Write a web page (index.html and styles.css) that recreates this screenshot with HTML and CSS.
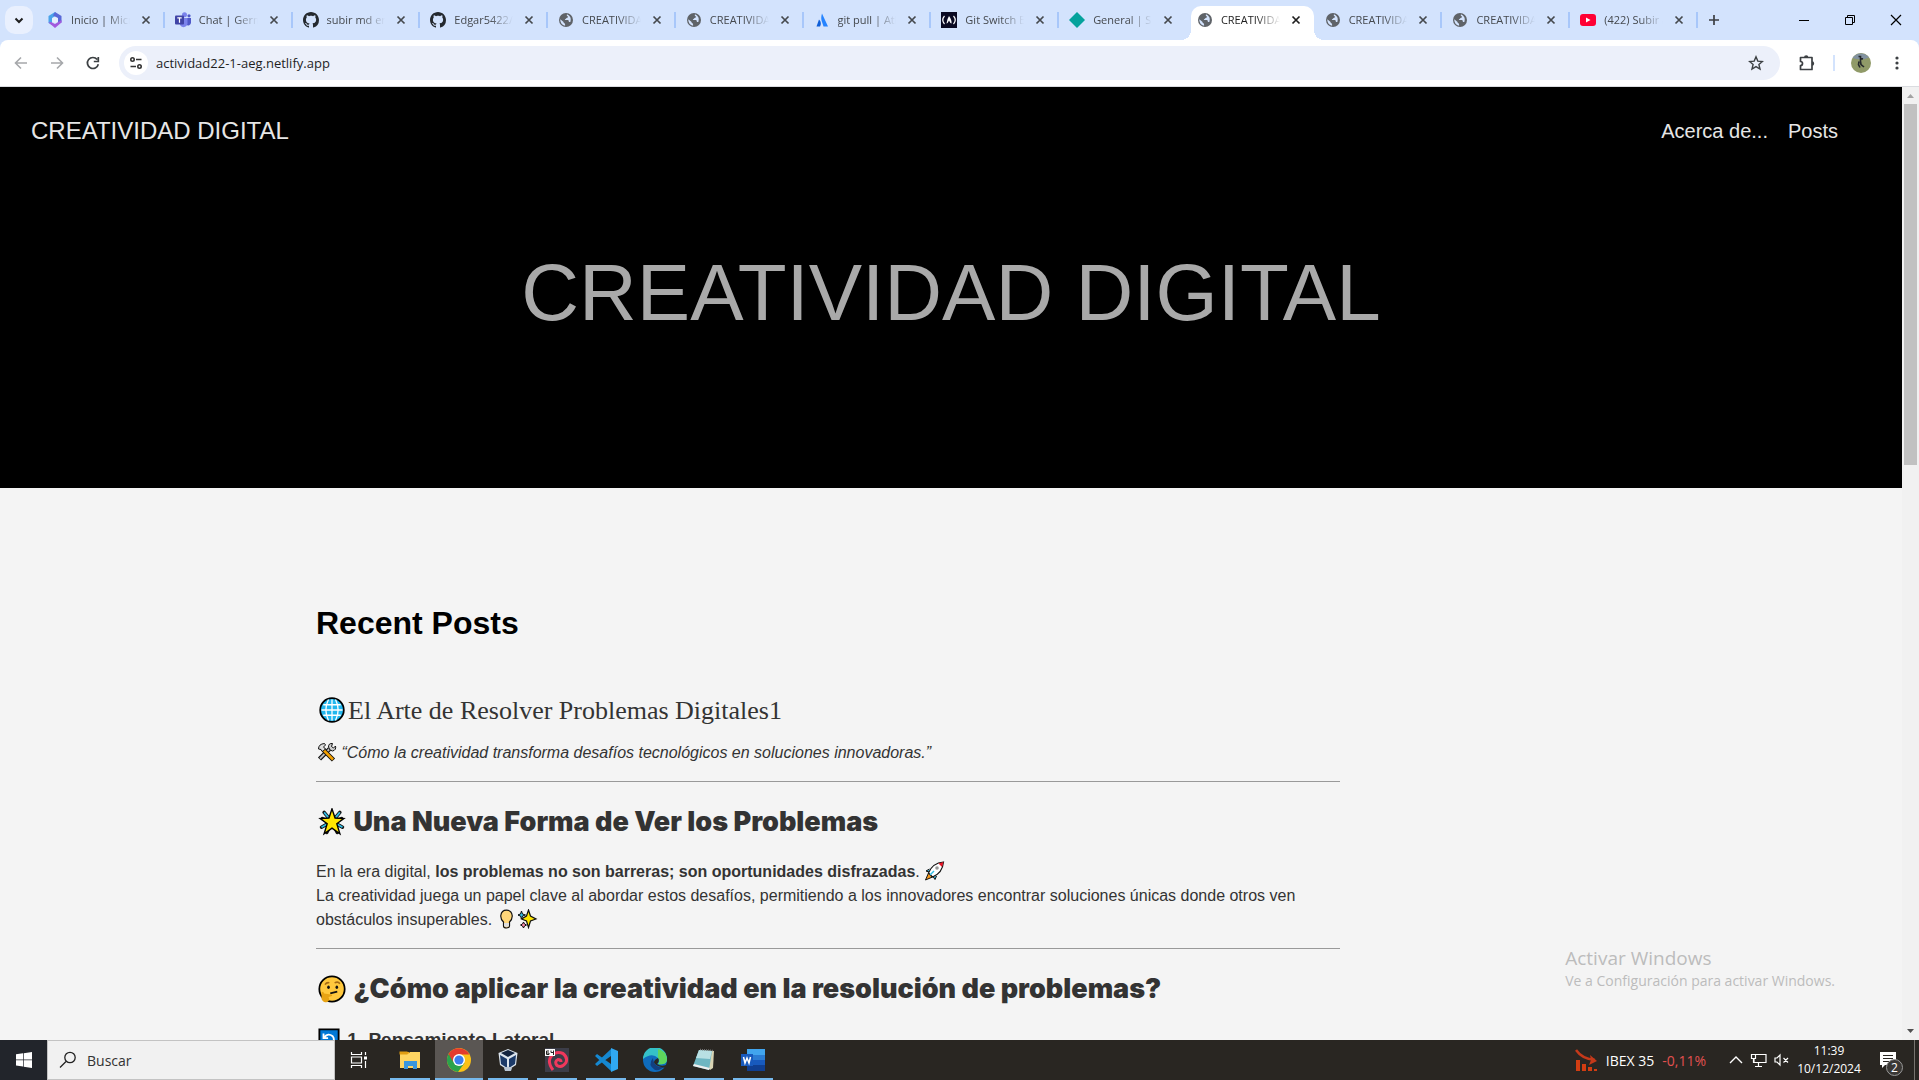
FILE: index.html
```html
<!DOCTYPE html>
<html lang="es">
<head>
<meta charset="utf-8">
<meta name="viewport" content="width=device-width, initial-scale=1">
<title>CREATIVIDAD DIGITAL</title>
<link rel="stylesheet" href="styles.css">
</head>
<body>
<svg class="sprite" aria-hidden="true">
  <symbol id="i-globe" viewBox="0 0 16 16"><circle cx="8" cy="8" r="7" fill="#5f6368"/><path d="M9 2.2c-.4 1.2-.2 1.7.5 2 .9.3.5 1.3-.3 1.5-1 .2-.8 1-1.800 1.200-.9.200-.6 1 .1 1h2.300c.9 0 1 .8 1 1.500 0 .7 1 .6 1.700.3a5.800 5.800 0 0 0-3.500-7.500zM2.300 7.200l3 2.600c.5.500.2 1.200 1 1.400.9.200.8 1 .8 2.500A5.800 5.800 0 0 1 2.300 7.200z" fill="#d3e3fd"/></symbol>
  <symbol id="i-close" viewBox="0 0 16 16"><path d="M4.500 4.500l7 7M11.500 4.500l-7 7" stroke="currentColor" stroke-width="1.700"/></symbol>
  <symbol id="i-github" viewBox="0 0 16 16"><path fill="#24292f" d="M8 0C3.580 0 0 3.580 0 8c0 3.540 2.290 6.530 5.470 7.590.4.070.55-.17.55-.38 0-.19-.01-.82-.01-1.490-2.010.37-2.530-.49-2.690-.94-.09-.23-.48-.94-.82-1.130-.28-.15-.68-.52-.01-.53.63-.01 1.080.58 1.230.82.72 1.210 1.870.87 2.330.66.070-.52.28-.87.51-1.070-1.780-.2-3.640-.89-3.640-3.950 0-.87.31-1.590.82-2.150-.08-.2-.36-1.020.08-2.120 0 0 .67-.21 2.200.82.64-.18 1.320-.27 2-.27s1.360.09 2 .27c1.530-1.040 2.200-.82 2.200-.82.44 1.100.16 1.920.08 2.120.51.56.82 1.270.82 2.150 0 3.070-1.870 3.750-3.650 3.950.29.25.54.73.54 1.480 0 1.070-.01 1.930-.01 2.200 0 .21.15.46.55.38A8.010 8.010 0 0 0 16 8c0-4.420-3.580-8-8-8z"/></symbol>
</svg>

<header class="browser">
  <div class="tabstrip">
    <button class="tab-search" aria-label="Buscar pestañas"><svg width="16" height="16" viewBox="0 0 16 16"><path d="M4.500 6.500L8 10l3.500-3.500" fill="none" stroke="#1f1f1f" stroke-width="2"/></svg></button>
    <ul class="tabs">
      <li class="tab"><svg class="tab-icon" viewBox="0 0 16 16"><path d="M8 0L1.500 4v7L5 13V6l5-3z" fill="#4aa3ea"/><path d="M8 0l6.500 4v6.500L11 12V6L6 3.500z" fill="#5968d8"/><path d="M1.500 10.500L8 16l6.500-5.500V8L8 12 4 10z" fill="#a259dd"/><path d="M8 5l3 1.500v3L8 11 5 9.500v-3z" fill="#e6effd"/></svg><button class="tab-title">Inicio | Microsoft 365</button><button class="tab-close" aria-label="Cerrar"><svg><use href="#i-close"/></svg></button></li>
      <li class="tab"><svg class="tab-icon" viewBox="0 0 16 16"><circle cx="9.500" cy="2.800" r="2.500" fill="#7b83eb"/><circle cx="14" cy="3.800" r="1.600" fill="#5059c9"/><path d="M11.500 6H16v5a3 3 0 0 1-4.500 2z" fill="#5059c9"/><path d="M5 6h7.500v5.500a4 4 0 0 1-7.500 1.500z" fill="#7b83eb"/><rect y="3.500" width="9" height="9" rx="1" fill="#4044a6"/><path d="M2.300 5.800h4.400M4.500 5.800v5" stroke="#fff" stroke-width="1.200"/></svg><button class="tab-title">Chat | German</button><button class="tab-close" aria-label="Cerrar"><svg><use href="#i-close"/></svg></button></li>
      <li class="tab"><svg class="tab-icon"><use href="#i-github"/></svg><button class="tab-title">subir md en github</button><button class="tab-close" aria-label="Cerrar"><svg><use href="#i-close"/></svg></button></li>
      <li class="tab"><svg class="tab-icon"><use href="#i-github"/></svg><button class="tab-title">Edgar5422/actividad</button><button class="tab-close" aria-label="Cerrar"><svg><use href="#i-close"/></svg></button></li>
      <li class="tab"><svg class="tab-icon"><use href="#i-globe"/></svg><button class="tab-title">CREATIVIDAD DIGITAL</button><button class="tab-close" aria-label="Cerrar"><svg><use href="#i-close"/></svg></button></li>
      <li class="tab"><svg class="tab-icon"><use href="#i-globe"/></svg><button class="tab-title">CREATIVIDAD DIGITAL</button><button class="tab-close" aria-label="Cerrar"><svg><use href="#i-close"/></svg></button></li>
      <li class="tab"><svg class="tab-icon" viewBox="0 0 16 16"><path d="M5 7.500c2.500 2.500 2 5 1 7H2.500z" fill="#0f5fd8"/><path d="M8 1.500L14 14.500H9.500C8.500 10 6 8 8 1.500z" fill="#2684ff"/></svg><button class="tab-title">git pull | Atlassian Git</button><button class="tab-close" aria-label="Cerrar"><svg><use href="#i-close"/></svg></button></li>
      <li class="tab"><svg class="tab-icon" viewBox="0 0 16 16"><path d="M0 0h16v16H0z" fill="#0a0a23"/><path d="M3.500 4Q0 8 3.500 12M12.500 4q3.500 4 0 8" fill="none" stroke="#fff" stroke-width="1.200"/><path d="M8 4q3 4 2.500 7.500Q9 11 8 8.500 7 11 5.500 11.500 6 7 8 4z" fill="#fff"/></svg><button class="tab-title">Git Switch Branch</button><button class="tab-close" aria-label="Cerrar"><svg><use href="#i-close"/></svg></button></li>
      <li class="tab before-active"><svg class="tab-icon" viewBox="0 0 16 16"><path d="M8 0l8 8-8 8-8-8z" fill="#05a29c"/></svg><button class="tab-title">General | Site</button><button class="tab-close" aria-label="Cerrar"><svg><use href="#i-close"/></svg></button></li>
      <li class="tab active"><svg class="tab-icon"><use href="#i-globe"/></svg><button class="tab-title">CREATIVIDAD DIGITAL</button><button class="tab-close" aria-label="Cerrar"><svg><use href="#i-close"/></svg></button></li>
      <li class="tab"><svg class="tab-icon"><use href="#i-globe"/></svg><button class="tab-title">CREATIVIDAD DIGITAL</button><button class="tab-close" aria-label="Cerrar"><svg><use href="#i-close"/></svg></button></li>
      <li class="tab"><svg class="tab-icon"><use href="#i-globe"/></svg><button class="tab-title">CREATIVIDAD DIGITAL</button><button class="tab-close" aria-label="Cerrar"><svg><use href="#i-close"/></svg></button></li>
      <li class="tab"><svg class="tab-icon" viewBox="0 0 16 16"><rect y="2" width="16" height="12" rx="3" fill="#ff0033"/><path d="M6 5.500L10.500 8 6 10.500z" fill="#fff"/></svg><button class="tab-title">(422) Subir archivos</button><button class="tab-close" aria-label="Cerrar"><svg><use href="#i-close"/></svg></button></li>
    </ul>
    <button class="new-tab" aria-label="Nueva pestaña"><svg width="12" height="12" viewBox="0 0 12 12"><path d="M6 1v10M1 6h10" stroke="#3c3f43" stroke-width="1.700"/></svg></button>
    <div class="window-controls">
      <button aria-label="Minimizar"><svg width="12" height="12" viewBox="0 0 12 12"><path d="M1 6.500h10" stroke="#000"/></svg></button>
      <button aria-label="Restaurar"><svg width="12" height="12" viewBox="0 0 12 12"><path d="M1.500 3.500h7v7h-7zM3.500 3.500v-2h7v7h-2" fill="none" stroke="#000"/></svg></button>
      <button aria-label="Cerrar ventana"><svg width="12" height="12" viewBox="0 0 12 12"><path d="M1 1l10 10M11 1L1 11" stroke="#000" stroke-width="1.200"/></svg></button>
    </div>
  </div>
  <div class="toolbar">
    <button class="tool" aria-label="Atrás"><svg width="16" height="16" viewBox="0 0 16 16"><path d="M14 8H3M8 2.500L2.500 8 8 13.500" fill="none" stroke="#a6a8ab" stroke-width="1.600"/></svg></button>
    <button class="tool" aria-label="Adelante"><svg width="16" height="16" viewBox="0 0 16 16"><path d="M2 8h11M8 2.500L13.500 8 8 13.500" fill="none" stroke="#a6a8ab" stroke-width="1.600"/></svg></button>
    <button class="tool" aria-label="Recargar"><svg width="16" height="16" viewBox="0 0 16 16"><path d="M13.300 9.200A5.500 5.500 0 1 1 12.200 4.500M13.300 2v4.500H8.800" fill="none" stroke="#3c4043" stroke-width="1.700"/></svg></button>
    <div class="omnibox">
      <button class="site-info" aria-label="Información del sitio"><svg width="14" height="14" viewBox="0 0 14 14"><g fill="none" stroke="#333" stroke-width="1.600"><circle cx="3.500" cy="3.500" r="1.700"/><path d="M7 3.500h5.500M1.500 10.500H7"/><circle cx="10.500" cy="10.500" r="1.700"/></g></svg></button>
      <input class="address" type="text" aria-label="Dirección" value="actividad22-1-aeg.netlify.app">
      <button class="star" aria-label="Añadir a marcadores"><svg width="16" height="16" viewBox="0 0 16 16"><path d="M8 1.800l1.800 4.300 4.600.4-3.500 3 1.100 4.600L8 11.600l-4 2.500 1.100-4.600-3.500-3 4.600-.4z" fill="none" stroke="#3c4043" stroke-width="1.400"/></svg></button>
    </div>
    <button class="extensions" aria-label="Extensiones"><svg width="18" height="18" viewBox="0 0 18 18"><path d="M2.500 3.500H14v12H2.500v-4a2 2 0 0 0 0-4z" fill="none" stroke="#3c4043" stroke-width="1.700" stroke-linejoin="round"/><path d="M6 3.500a2.200 2.200 0 0 1 4.400 0zM14 7.300a2.200 2.200 0 0 1 0 4.400z" fill="#3c4043"/></svg></button>
    <span class="divider"></span>
    <button class="avatar" aria-label="Perfil"><svg width="20" height="20" viewBox="0 0 20 20"><circle cx="10" cy="10" r="10" fill="#909a68"/><path d="M1.500 5A10 10 0 0 1 18 4.500Q10 8 1.500 5z" fill="#8292a0"/><path d="M7.500 3.500h2v5l.5 3 3 2.500M8 8.500l-.5 3 1.500 3M9 5l3 1" fill="none" stroke="#25282b" stroke-width="1.600"/></svg></button>
    <button class="menu" aria-label="Menú"><svg width="16" height="16" viewBox="0 0 16 16" fill="#3c4043"><circle cx="8" cy="3" r="1.600"/><circle cx="8" cy="8" r="1.600"/><circle cx="8" cy="13" r="1.600"/></svg></button>
  </div>
</header>

<div class="viewport">
  <div class="page">
    <header class="site-header">
      <nav class="site-nav">
        <a class="brand" href="#">CREATIVIDAD DIGITAL</a>
        <div class="nav-links"><a href="#">Acerca de...</a><a href="#">Posts</a></div>
      </nav>
      <h1 class="hero">CREATIVIDAD DIGITAL</h1>
    </header>
    <main class="posts">
      <h2 class="section-title">Recent Posts</h2>
      <article class="post">
        <a class="post-title" href="#"><svg class="emoji-lg" viewBox="0 0 32 32" role="img" aria-label="Globo"><circle cx="16" cy="16" r="13.500" fill="#22b7ee" stroke="#000" stroke-width="2"/><path d="M16 4v24M4 16h24M6 10h20M6 22h20M12 4Q6 16 12 28M20 4q6 12 0 24" stroke="#fff" stroke-width="1.500" fill="none"/></svg>El Arte de Resolver Problemas Digitales1</a>
        <p><svg class="emoji" viewBox="0 0 20 20" role="img" aria-label="Herramientas"><path d="M3 17L13 7" stroke="#111" stroke-width="4.500"/><path d="M3.500 16.500L13 7" stroke="#bbb" stroke-width="2"/><path d="M12 5q0-4 4-3.500l-1 3 2 1.500 2-2q1 4-3 5-3 0-4-4z" fill="#ccc" stroke="#111"/><path d="M6 7l11 11" stroke="#111" stroke-width="4.500"/><path d="M7 8l9.500 9.500" stroke="#f4a000" stroke-width="2.500"/><path d="M2 7q0-5 6-5.500l1 1.500-2 2 2 2-3 2.500-1.500-2z" fill="#ddd" stroke="#111"/></svg> <em>“Cómo la creatividad transforma desafíos tecnológicos en soluciones innovadoras.”</em></p>
        <hr>
        <h2><svg class="emoji-lg" viewBox="0 0 32 32" role="img" aria-label="Estrella"><path d="M7 5l5 6M25 5l-5 6M4 22l7-4M28 22l-7-4M5 12l6 3M27 12l-6 3M10 28l3-6M22 28l-3-6" stroke="#111" stroke-width="4" stroke-linecap="round"/><path d="M7 5l5 6M25 5l-5 6M4 22l7-4M28 22l-7-4" stroke="#31bde5" stroke-width="2"/><path d="M16 1l3.500 10.500 10 .500-8 6 3.500 11.500L16 23 7 29.500l3.500-11.500-8-6 10-.500z" fill="#ffe600" stroke="#000" stroke-width="1.600"/></svg> Una Nueva Forma de Ver los Problemas</h2>
        <p>En la era digital, <strong>los problemas no son barreras; son oportunidades disfrazadas</strong>. <svg class="emoji" viewBox="0 0 20 20" role="img" aria-label="Cohete"><path d="M5 8L1.500 10l3 1M12 15l-1.500 3.500-2-3" fill="#31bde5" stroke="#111"/><path d="M4 12l-3 7 7-3z" fill="#f79a1c" stroke="#111"/><path d="M4 12Q8 2 19 1q-1 11-11 15z" fill="#fff" stroke="#111" stroke-width="1.200"/><path d="M14 2.500L19 1l-1.500 5z" fill="#e81224"/><circle cx="12.500" cy="7" r="1.800" fill="#999"/><path d="M5.500 14l4-4" stroke="#31bde5" stroke-width="1.500"/></svg><br>La creatividad juega un papel clave al abordar estos desafíos, permitiendo a los innovadores encontrar soluciones únicas donde otros ven obstáculos insuperables. <svg class="emoji" viewBox="0 0 20 20" role="img" aria-label="Bombilla"><path d="M6 13Q3 10 3.300 6.500 4 1.200 9 1.200t5.700 5.300Q15 10 12 13v4q0 2-3 2t-3-2z" fill="#ffd679" stroke="#111" stroke-width="1.200"/><path d="M6.500 14h5v3q-2.500 2-5 0z" fill="#ddd"/></svg><svg class="emoji" viewBox="2 0 20 20" role="img" aria-label="Destellos"><path d="M5 2l1 3 3 1-3 1-1 3-1-3-3-1 3-1z" fill="#31bde5" stroke="#111"/><path d="M7 13l1 2 2 1-2 1-1 2-1-2-2-1 2-1z" fill="#f8a" stroke="#111"/><path d="M12 1l2 6 5.500 3-5.500 2-2 6.500-2-6.500L5 10l5-3z" fill="#ffe600" stroke="#111" stroke-width="1.200"/></svg></p>
        <hr>
        <h2><svg class="emoji-lg" viewBox="0 0 32 32" role="img" aria-label="Cara pensativa"><circle cx="16" cy="16" r="14.500" fill="#ffc83d" stroke="#000" stroke-width="2"/><path d="M8 11q2-3 5-2M19 9q4-2 6 1" fill="none" stroke="#a66b13" stroke-width="1.800"/><ellipse cx="12" cy="14" rx="1.500" ry="2" fill="#111"/><ellipse cx="21.500" cy="14" rx="1.500" ry="2" fill="#111"/><path d="M14 21l8-2" stroke="#111" stroke-width="1.800"/><path d="M4 20q2-2 3 1l6 1q4 0 3 2l-4 1q2 4-1 5.500-5 2-7-3z" fill="#e8a313"/></svg> ¿Cómo aplicar la creatividad en la resolución de problemas?</h2>
        <h3><svg class="emoji-md" viewBox="0 0 24 24" role="img" aria-label="Flechas"><path d="M1.500 1.500h21v21h-21z" fill="#0078d7" stroke="#000" stroke-width="2"/><path d="M6 6v5h5M7 10q4-5 9-1 3 4-1 7" fill="none" stroke="#fff" stroke-width="2"/></svg> 1. Pensamiento Lateral</h3>
      </article>
    </main>
  </div>
  <div class="scrollbar" aria-hidden="true">
    <svg class="arrow" viewBox="0 0 17 17"><path d="M5 11l3.500-4 3.500 4z" fill="#a3a3a3"/></svg>
    <span class="track"><span class="thumb"></span></span>
    <svg class="arrow" viewBox="0 0 17 17"><path d="M5 6l3.500 4L12 6z" fill="#505050"/></svg>
  </div>
  <aside class="watermark"><p class="watermark-title">Activar Windows</p><p>Ve a Configuración para activar Windows.</p></aside>
</div>

<footer class="taskbar">
  <button class="start" aria-label="Inicio"><svg width="16" height="16" viewBox="0 0 16 16" fill="#fff"><path d="M0 2.300l7-1v6.200H0zM7.700 1.200L16 0v7.500H7.700zM0 8.200h7v6.300l-7-1zM7.700 8.200H16V16l-8.300-1.200z"/></svg></button>
  <label class="search"><svg width="18" height="18" viewBox="0 0 18 18"><circle cx="11" cy="6.500" r="5.200" fill="none" stroke="#222" stroke-width="1.300"/><path d="M7 10.500L1 16.500" stroke="#222" stroke-width="1.300"/></svg><input type="text" placeholder="Buscar" aria-label="Buscar"></label>
  <button class="task-view" aria-label="Vista de tareas"><svg width="18" height="16" viewBox="0 0 18 16"><path d="M1.500 0v2.500h10V0M1.500 5h10v6h-10zM1.500 16v-2.500h10V16M15.500 0v3M15.500 9v7" fill="none" stroke="#fff" stroke-width="1.200"/><path d="M14 4.500h3v3h-3z" fill="#fff"/></svg></button>
  <div class="apps">
    <button class="app" aria-label="Explorador de archivos"><svg viewBox="0 0 24 24"><path d="M2 4h9v3H2z" fill="#e8a317"/><path d="M2 6h8l2-2h10v16H2z" fill="#ffd562"/><path d="M1.500 3.500h8v3h-8z" fill="#e09d13"/><path d="M6 21v-8h13v8h-4v-3h-5v3z" fill="#3a96dd"/></svg></button>
    <button class="app current" aria-label="Google Chrome"><svg viewBox="0 0 24 24"><circle cx="12" cy="12" r="12" fill="#fbc116"/><path d="M12 12L1.600 6A12 12 0 0 0 11 24l6.500-9z" fill="#2ba24c"/><path d="M1.600 6a12 12 0 0 1 20.800 0.500H12a6 6 0 0 0-5.500 8z" fill="#e33b2e"/><circle cx="12" cy="12" r="6" fill="#fff"/><circle cx="12" cy="12" r="4.600" fill="#3b7ded"/></svg></button>
    <button class="app" aria-label="VirtualBox"><svg viewBox="0 0 24 24"><path d="M12 1l9.500 4-1.500 12-8 5-8-5L2.500 5z" fill="#dce5ee"/><path d="M5 5l7-3 7 3-7 4z" fill="#12233f"/><path d="M4 7l7 4v9l-6-4zM20 7l-7 4v9l6-4z" fill="#1b3a69"/><path d="M8 20l4-1.500 4 1.500-1 3H9z" fill="#b8c5d4"/></svg></button>
    <button class="app" aria-label="Debian"><svg viewBox="0 0 24 24"><path d="M0 0h24v24H0z" fill="#3c3d48"/><path d="M8 22Q2 14 6 8.500q5-6 12-3 5 4 3 9-4 6-9 3-3-4 1-6 3 0 3 2.500" fill="none" stroke="#f0385c" stroke-width="3"/><path d="M0 1h10v7H0z" fill="#fff"/><path d="M4 3H1.500v3.500H4V5H2M6 2.500v2h2.500M8.500 2.500v4.500" fill="none" stroke="#222"/></svg></button>
    <button class="app" aria-label="Visual Studio Code"><svg viewBox="0 0 24 24"><path d="M1 16L17 1v7L3 18zM1 8l2-2 14 10v7z" fill="#1588d1"/><path d="M17 0l7 3v18l-7 3z" fill="#30a8f2"/></svg></button>
    <button class="app" aria-label="Microsoft Edge"><svg viewBox="0 0 24 24"><circle cx="12" cy="12" r="12" fill="#0f6cbd"/><path d="M0 11A12 12 0 0 1 24 11c0 5-5 6-9 5q2-3 0-6Q9 4 0 11z" fill="#35c1c8"/><path d="M15 1q8 2 9 10c0 5-5 6-9 5 2-2 2-5 0-6z" fill="#5fd55c"/><path d="M10 10q-6 7 2 12 5 1 10-4-4 2-8 0-4-3-4-8z" fill="#123f80"/><path d="M15 10q2 3-1 6 4 3 9 1l1 3q-9-1-12-4-3-3 3-6z" fill="#2b2824"/></svg></button>
    <button class="app" aria-label="Bloc de notas"><svg viewBox="0 0 24 24"><path d="M8 2l14 1-1 17-3 2z" fill="#d8d4b4"/><path d="M7 2l13 1-3 19-16-4z" fill="#6eb6c2"/><path d="M7 2l13 1-2 8-14-1z" fill="#b9e0e3"/><path d="M1 18l16 4 1-2-16-4z" fill="#eee"/><path d="M8 1.500l13 1" stroke="#777" stroke-width="1.500" stroke-dasharray="1 1"/></svg></button>
    <button class="app" aria-label="Word"><svg viewBox="0 0 24 24"><path d="M6 1h18v6H6z" fill="#41a5ee"/><path d="M6 7h18v5H6z" fill="#2b7cd3"/><path d="M6 12h18v5H6z" fill="#185abd"/><path d="M6 17h18v6H6z" fill="#103f91"/><path d="M0 6h12v12H0z" fill="#185abd"/><path d="M2.500 9l1.500 6 2-5 2 5 1.500-6" fill="none" stroke="#fff" stroke-width="1.500"/></svg></button>
  </div>
  <div class="tray">
    <button class="stock"><svg width="23" height="23" viewBox="0 0 23 23"><path d="M1 1q6 9 19 10" fill="none" stroke="#c4391a" stroke-width="2.500"/><path d="M15 6l7 6-8 4 2-5z" fill="#c4391a"/><path d="M1 11h4v11H1zM7 15h4v7H7zM13 18h4v4h-4zM19 20h3v2h-3z" fill="#d13d12"/></svg><span>IBEX 35</span><span class="change">-0,11%</span></button>
    <button class="tray-icon" aria-label="Iconos ocultos"><svg width="14" height="16" viewBox="0 0 14 16"><path d="M1 11l6-6 6 6" fill="none" stroke="#fff" stroke-width="1.400"/></svg></button>
    <button class="tray-icon" aria-label="Red"><svg width="17" height="16" viewBox="0 0 17 16"><path d="M5 2.500h11v8H4V7M5 14.500h7M8.500 11v3M1.500 2.500h4v4h-4zM3.500 7v4" fill="none" stroke="#fff" stroke-width="1.200"/></svg></button>
    <button class="tray-icon" aria-label="Volumen"><svg width="16" height="16" viewBox="0 0 16 16"><path d="M1 6v4h2l3 3V3L3 6zM9.500 6l4.500 4.500M14 6l-4.500 4.500" fill="none" stroke="#fff" stroke-width="1.200"/></svg></button>
    <button class="clock"><span>11:39</span><span>10/12/2024</span></button>
    <button class="notifications" aria-label="Notificaciones"><svg width="16" height="16" viewBox="0 0 16 16"><path d="M0 0h16v13H5l-3 3v-3H0z" fill="#fff"/><path d="M3 3.500h10M3 6.500h10M3 9.500h6" stroke="#292622"/></svg><span class="badge">2</span></button>
  </div>
</footer>
</body>
</html>
```
FILE: styles.css
```css
* { box-sizing: border-box; }
body {
  margin: 0;
  height: 100vh;
  display: flex;
  flex-direction: column;
  overflow: hidden;
  font-family: "Liberation Sans", Arial, sans-serif;
}
button { border: 0; padding: 0; background: none; font: inherit; color: inherit; display: flex; align-items: center; justify-content: center; }
input { border: 0; padding: 0; background: none; outline: 0; font: inherit; color: inherit; min-width: 0; }
a { color: inherit; text-decoration: none; }
.sprite { display: none; }

/* Browser window */
.browser, .taskbar, .watermark { font-family: "Open Sans", "Noto Sans", sans-serif; }
.browser { background: #d3e3fd; flex: none; }
.tabstrip { display: flex; align-items: center; height: 40px; }
.tab-search { width: 28px; height: 28px; margin: 0 3px 0 5px; border-radius: 10px; background: #e9f0fe; }
.tabs { flex: 1; min-width: 0; display: flex; height: 40px; margin: 0; padding: 0; list-style: none; }
.tab { flex: 1 1 0; min-width: 0; display: flex; align-items: center; padding: 0 10px 0 11px; color: #45494e; position: relative; }
.tab::after { content: ""; position: absolute; right: -1px; top: 12px; width: 2px; height: 16px; background: #a8c7fa; }
.before-active::after { display: none; }
.tab-icon { width: 16px; height: 16px; flex: none; margin-right: 8px; }
.tab-title {
  flex: 1; min-width: 0; overflow: hidden; white-space: nowrap; justify-content: flex-start;
  font-size: 11px; line-height: 20px;
  -webkit-mask-image: linear-gradient(to right, #000 60%, transparent);
  mask-image: linear-gradient(to right, #000 60%, transparent);
}
.tab-close { width: 16px; height: 16px; margin-left: 8px; flex: none; }
.tab-close svg { width: 16px; height: 16px; }
.tab.active { color: #1f1f1f; z-index: 1; }
.tab.active::before {
  content: ""; position: absolute; z-index: -1; inset: 6px 0 0 5px;
  border-radius: 10px 10px 0 0; background: #fff;
}
/* curved feet of the selected tab */
.tab.active::after {
  z-index: -1; inset: auto -10px 0 -5px; width: auto; height: 10px;
  background:
    radial-gradient(circle at 0 0, transparent 10px, #fff 10px) left / 10px 10px no-repeat,
    radial-gradient(circle at 100% 0, transparent 10px, #fff 10px) right / 10px 10px no-repeat;
}
.new-tab { width: 28px; height: 28px; margin: 0 53px 0 3px; }
.window-controls { display: flex; }
.window-controls button { width: 46px; height: 40px; }
.toolbar {
  display: flex; align-items: center; height: 47px; padding: 0 14px 0 3px;
  background: #fff; border-bottom: 1px solid #dadce0; border-radius: 8px 8px 0 0;
}
.tool { width: 36px; height: 34px; }
.omnibox { flex: 1; display: flex; align-items: center; height: 34px; margin-left: 8px; padding: 0 16px 0 5px; border-radius: 17px; background: #ecf0fa; }
.site-info { width: 24px; height: 24px; border-radius: 12px; background: #fff; margin-right: 8px; }
.address { flex: 1; font-size: 13px; line-height: 20px; color: #1f1f1f; }
.extensions { margin-left: 18px; }
.divider { width: 2px; height: 16px; margin: 0 16px 0 17px; background: #d3e3fd; }
.menu { margin-left: 18px; }

/* Page */
.viewport { flex: 1; min-height: 0; display: flex; position: relative; background: #f4f4f4; overflow: hidden; }
.page { flex: 1; min-width: 0; overflow: hidden; color: #333; }
.site-header { background: #000; color: #e6e6e6; padding-bottom: 147px; }
.site-nav { display: flex; justify-content: space-between; align-items: center; padding: 24px 64px 24px 31px; line-height: 40px; }
.brand { font-size: 24px; }
.nav-links { display: flex; gap: 20px; font-size: 20px; }
.hero { margin: 0; padding-top: 70px; font-size: 80px; line-height: 96px; font-weight: 400; text-align: center; color: #a9a9a9; }
.posts { max-width: 1340px; padding: 111px 0 0 316px; font-size: 16px; line-height: 24px; }
.section-title { margin: 0 0 44px; font-size: 32px; line-height: 48px; color: #000; }
.post-title { display: block; font-family: "Liberation Serif", serif; font-size: 26px; line-height: 40px; }
.post p { margin: 10px 0 16px; }
.post hr { margin: 16px 0; border: 0; border-top: 1px solid #999; }
.post h2 { margin: 20px 0 0; font-family: Inter, sans-serif; font-weight: 900; font-size: 27px; line-height: 40px; }
.post h2 + p { margin-top: 18px; }
.post h3 { margin: 17px 0; font-size: 19px; line-height: 28px; }
.emoji-lg { width: 32px; height: 28px; vertical-align: -5px; }
.emoji-md { width: 26px; height: 22px; vertical-align: -4px; }
.emoji { width: 21px; height: 20px; vertical-align: -4px; }
.scrollbar { width: 17px; display: flex; flex-direction: column; background: #f1f1f1; }
.arrow { width: 17px; height: 17px; flex: none; }
.track { flex: 1; padding: 0 2px; }
.thumb { display: block; height: 39.3%; background: #c1c1c1; }
.watermark { position: absolute; right: 84px; bottom: 49px; color: #bcbcbc; font-size: 14px; line-height: 20px; }
.watermark p { margin: 0; }
.watermark .watermark-title { font-size: 19px; line-height: 26px; }

/* Taskbar */
.taskbar { flex: none; display: flex; height: 40px; background: #292622; color: #fff; }
.start { width: 47px; background: #22252b; }
.search { width: 288px; display: flex; align-items: center; gap: 10px; padding-left: 11px; background: #f1f1f1; border: 1px solid #c3c3c3; font-size: 14px; color: #333; }
.search input::placeholder { color: #333; opacity: 1; }
.task-view { width: 48px; margin-right: 3px; }
.apps { display: flex; gap: 1px; }
.app { width: 48px; position: relative; }
.app svg { width: 24px; height: 24px; }
.app::after { content: ""; position: absolute; inset: auto 4px 0; height: 2px; background: #76b9ed; }
.app.current { background: #5a5653; }
.app.current::after { inset: auto 0 0; }
.tray { margin-left: auto; display: flex; align-items: center; padding-right: 4px; font-size: 12px; }
.tray button { height: 40px; }
.stock { font-size: 14px; gap: 8px; margin-right: 18px; }
.change { color: #e35150; }
.tray-icon { width: 23px; }
.tray .clock { flex-direction: column; width: 64px; line-height: 18px; margin-left: 4px; }
.notifications { width: 54px; position: relative; border-right: 1px solid #77746f; }
.badge { position: absolute; left: 25px; top: 19px; width: 17px; height: 17px; border: 1px solid #999; border-radius: 9px; background: #3a3835; font-size: 12px; line-height: 15px; text-align: center; }
```
